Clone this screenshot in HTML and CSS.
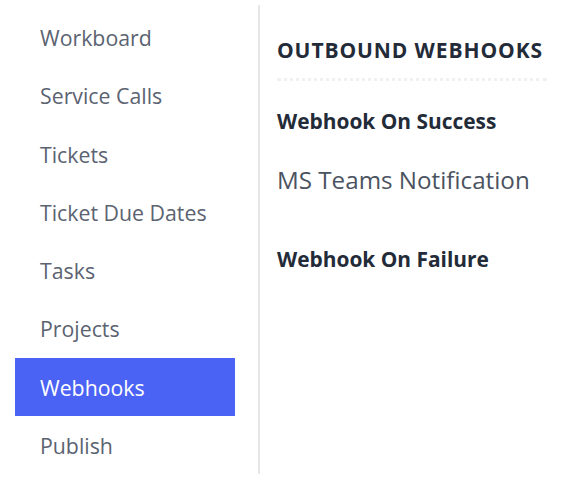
FILE: index.html
```html
<!DOCTYPE html>
<html>
<head>
<meta charset="utf-8">
<link rel="stylesheet" href="styles.css">
</head>
<body>
<div class="layout">
  <nav class="sidebar">
    <div class="item">Workboard</div>
    <div class="item">Service Calls</div>
    <div class="item">Tickets</div>
    <div class="item">Ticket Due Dates</div>
    <div class="item">Tasks</div>
    <div class="item">Projects</div>
    <div class="item active">Webhooks</div>
    <div class="item">Publish</div>
  </nav>
  <main class="content">
    <h2 class="title">OUTBOUND WEBHOOKS</h2>
    <div class="sep"></div>
    <h3 class="label">Webhook On Success</h3>
    <div class="value">MS Teams Notification</div>
    <h3 class="label failure">Webhook On Failure</h3>
  </main>
</div>
</body>
</html>
```

FILE: styles.css
```css
* { box-sizing: border-box; }
html, body { margin: 0; padding: 0; background: #fff; }
body { font-family: "Open Sans", "Noto Sans", sans-serif; }
.layout {
  display: flex;
  padding: 5px 0 0 15px;
  height: 480px;
}
.sidebar {
  width: 220px;
  display: flex;
  flex-direction: column;
  padding-top: 3px;
}
.item {
  height: 58.3px;
  padding: 2px 0 0 25px;
  line-height: 56px;
  font-size: 21.3px;
  color: #5b6371;
  white-space: nowrap;
}
.item.active {
  background: #4b63f5;
  color: #fff;
}
.content {
  margin-left: 23px;
  border-left: 2px solid #e6e6e6;
  height: 469px;
  padding: 32px 0 0 17px;
  width: 300px;
}
.title {
  margin: 0;
  font-size: 21px;
  letter-spacing: 0.9px;
  font-weight: 700;
  color: #232b38;
  line-height: 26px;
  white-space: nowrap;
}
.sep {
  margin-top: 15px;
  width: 270px;
  border-top: 3px dotted #f0f0f0;
}
.label {
  margin: 27px 0 0;
  font-size: 20.9px;
  font-weight: 700;
  color: #232b38;
  line-height: 26px;
  white-space: nowrap;
}
.value {
  margin-top: 31px;
  font-size: 24.2px;
  color: #4b5361;
  line-height: 30px;
  white-space: nowrap;
}
.label.failure { margin-top: 51px; }
```
